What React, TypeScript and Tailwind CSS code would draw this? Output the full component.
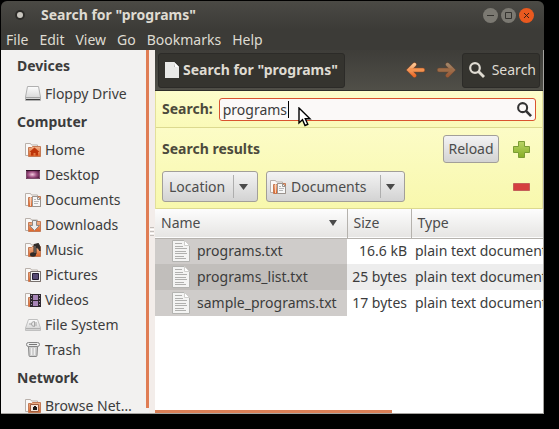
import React, { useState } from 'react';

type PlaceIconName =
  | 'floppy'
  | 'home'
  | 'desktop'
  | 'documents'
  | 'downloads'
  | 'music'
  | 'pictures'
  | 'videos'
  | 'filesystem'
  | 'trash'
  | 'network';

interface Place {
  label: string;
  icon: PlaceIconName;
}

const sections: { title: string; places: Place[] }[] = [
  { title: 'Devices', places: [{ label: 'Floppy Drive', icon: 'floppy' }] },
  {
    title: 'Computer',
    places: [
      { label: 'Home', icon: 'home' },
      { label: 'Desktop', icon: 'desktop' },
      { label: 'Documents', icon: 'documents' },
      { label: 'Downloads', icon: 'downloads' },
      { label: 'Music', icon: 'music' },
      { label: 'Pictures', icon: 'pictures' },
      { label: 'Videos', icon: 'videos' },
      { label: 'File System', icon: 'filesystem' },
      { label: 'Trash', icon: 'trash' },
    ],
  },
  { title: 'Network', places: [{ label: 'Browse Net…', icon: 'network' }] },
];

const menus = ['File', 'Edit', 'View', 'Go', 'Bookmarks', 'Help'];

const files = [
  { name: 'programs.txt', size: '16.6 kB', type: 'plain text document' },
  { name: 'programs_list.txt', size: '25 bytes', type: 'plain text document' },
  { name: 'sample_programs.txt', size: '17 bytes', type: 'plain text document' },
];

// Gradients shared by every icon on the page
function IconDefs() {
  return (
    <svg width="0" height="0" className="absolute" aria-hidden="true">
      <defs>
        <linearGradient id="orange" x1="0" y1="0" x2="0" y2="1">
          <stop offset="0" stopColor="#f0b690" />
          <stop offset="1" stopColor="#de6327" />
        </linearGradient>
        <linearGradient id="metal" x1="0" y1="0" x2="0" y2="1">
          <stop offset="0" stopColor="#fdfdfd" />
          <stop offset="1" stopColor="#cfcfcf" />
        </linearGradient>
        <linearGradient id="arrow" x1="0" y1="0" x2="0" y2="1">
          <stop offset="0" stopColor="#fbc490" />
          <stop offset="1" stopColor="#ec6c2a" />
        </linearGradient>
        <linearGradient id="plus" x1="0" y1="0" x2="0" y2="1">
          <stop offset="0" stopColor="#b9d565" />
          <stop offset="1" stopColor="#86ad26" />
        </linearGradient>
        <radialGradient id="aubergine" cx="0.45" cy="0.5" r="0.6">
          <stop offset="0" stopColor="#f3c6dc" />
          <stop offset="0.5" stopColor="#a05083" />
          <stop offset="1" stopColor="#4b1438" />
        </radialGradient>
      </defs>
    </svg>
  );
}

function FolderBase() {
  return (
    <>
      <path d="M.5 13.5v-12h5l1 1.500h6v10.500z" fill="#faf8f6" stroke="#b9b0aa" />
      <path d="M3.500 14.500v-9h3l1-1h8v10z" fill="url(#orange)" stroke="#c47a55" />
    </>
  );
}

function PlaceIcon({ name }: { name: PlaceIconName }) {
  return (
    <svg width="16" height="16" viewBox="0 0 16 16" fill="none" className="shrink-0" aria-hidden="true">
      {name === 'floppy' && (
        <>
          <path d="M2.500.500h11l2 10.500v3.500H.5V11z" fill="url(#metal)" stroke="#b0b0b0" />
          <path d="M1 11.500h14" stroke="#a3a3a3" />
          <path d="M1 13.500h14" stroke="#3c3c3c" />
        </>
      )}
      {name === 'home' && (
        <>
          <FolderBase />
          <path d="M9.500 5.500 4.500 10h1.500v3.500h2.500V11h2v2.500H13V10h1.500z" fill="#bd3409" />
        </>
      )}
      {name === 'desktop' && (
        <>
          <path d="M1 3h14v9H1z" fill="url(#aubergine)" />
          <path d="M1 3.500h14" stroke="#311026" />
          <path d="M1.500 4v7.500h13V4" stroke="#7d4a6b" />
        </>
      )}
      {name === 'documents' && (
        <>
          <FolderBase />
          <path d="M5.500 5v9" stroke="#f7cdb4" />
          <path d="M7.500 4.500h5l3 3v7h-8z" fill="#f7f7f7" stroke="#9a948f" />
          <path d="M12.500 4.500v3h3" stroke="#9a948f" />
          <path d="M9 7.500h2M9 9.500h5M9 11.500h4" stroke="#b8b8b8" />
        </>
      )}
      {name === 'downloads' && (
        <>
          <FolderBase />
          <path d="M7.500 3.500h4v5h3l-5 5-5-5h3z" fill="#ececec" stroke="#8f8883" />
        </>
      )}
      {name === 'music' && (
        <>
          <FolderBase />
          <path d="M9 12V2.500l4.500-1L15 5v4l-2-3-2-.5V12z" fill="#302a27" stroke="#302a27" />
          <ellipse cx="8" cy="12.500" rx="3" ry="2.200" fill="#302a27" />
          <path d="M10 4v7" stroke="#8a8480" />
        </>
      )}
      {name === 'pictures' && (
        <>
          <FolderBase />
          <path d="M5.500 4.500h10v10h-10z" fill="#f4f4f4" stroke="#77716e" />
          <path d="M7.500 6.500h6v6h-6z" fill="#564a75" stroke="#221c33" />
        </>
      )}
      {name === 'videos' && (
        <>
          <FolderBase />
          <path d="M5 2h11v13H5z" fill="#2e2730" />
          <path d="M8 3h5v5H8zM8 9h5v5H8z" fill="#a786b8" />
          <path d="M6.500 3v12M14.500 3v12" stroke="#a39aa8" strokeDasharray="1 2" />
        </>
      )}
      {name === 'filesystem' && (
        <>
          <path d="M3.500 2.500h9l3 8.500v2.500H.5V11z" fill="url(#metal)" stroke="#c0c0c0" />
          <path d="M1 11.500h14" stroke="#b0b0b0" />
          <path d="M4 7h3M9.500 4.500q-3 0-3 2.500t3 2.500zM10 6h2M10 8h2" stroke="#a5a5a5" />
        </>
      )}
      {name === 'trash' && (
        <>
          <path d="m3.500 4.500.5 9q0 1 1 1h6q1 0 1-1l.5-9z" fill="#d0d0d0" stroke="#858585" />
          <path d="M6.500 6v7M9.500 6v7" stroke="#efefef" />
          <rect x="1.500" y=".5" width="13" height="4" rx="2" fill="#ececec" stroke="#858585" />
          <path d="M4 2.500h8" stroke="#777" />
        </>
      )}
      {name === 'network' && (
        <>
          <FolderBase />
          <path d="M5.500 6.500h8v7h-8z" fill="#f6e6dc" stroke="#9d5b3c" />
          <path d="M8 9h1V8h2v1h1v3H8z" fill="#1f1a18" />
        </>
      )}
    </svg>
  );
}

function PageIcon() {
  return (
    <svg width="14" height="16" viewBox="0 0 14 16" fill="none" className="shrink-0" aria-hidden="true">
      <path d="M0 0h9l5 5v11H0z" fill="#e9e9e7" />
      <path d="M9 0v5h5z" fill="#b6b6b2" />
      <path d="M9 0l5 5h-4z" fill="#fff" />
    </svg>
  );
}

function TextFileIcon() {
  return (
    <svg width="18" height="22" viewBox="0 0 18 22" fill="none" className="shrink-0" aria-hidden="true">
      <path d="M.5.500h12l5 5v16H.5z" fill="#f4f4f3" stroke="#b3b3b0" />
      <path d="M12.500.500v5h5z" fill="#fff" stroke="#d0d0cd" />
      <path
        d="M3 3.500h7M3 6.500h8M3 8.500h12M3 11.500h11M3 13.500h12M3 16.500h9M3 18.500h11"
        stroke="#b0b0ae"
      />
    </svg>
  );
}

function MagnifierIcon({ className }: { className: string }) {
  return (
    <svg viewBox="0 0 16 16" fill="none" stroke="currentColor" className={className} aria-hidden="true">
      <circle cx="6" cy="6" r="4.800" strokeWidth="2.200" />
      <path d="m9.500 9.500 5.500 5.500" strokeWidth="2.800" />
    </svg>
  );
}

function ArrowIcon({ className }: { className: string }) {
  return (
    <svg width="20" height="16" viewBox="0 0 20 16" fill="none" className={className} aria-hidden="true">
      <path d="M8.500 2.500 3 8l5.500 5.500M4 8h13" stroke="#8b4a26" strokeWidth="4.400" strokeLinecap="round" />
      <path d="M8.500 2.500 3 8l5.500 5.500" stroke="url(#arrow)" strokeWidth="3.400" strokeLinecap="round" />
      <path d="M3.500 6.300H17q1.500.2 1.500 1.700T17 9.700H3.500z" fill="#f3924f" />
    </svg>
  );
}

interface ComboProps {
  label: string;
  options: string[];
  className: string;
  icon?: React.ReactNode;
}

function Combo({ label, options, className, icon }: ComboProps) {
  return (
    <div className="relative">
      <select
        aria-label={label}
        className={`block h-[31px] appearance-none rounded-[3px] border border-[#a29f99] bg-linear-to-b from-[#f3f3f3] to-[#d3d3d3] outline-none ${className}`}
      >
        {options.map((option) => (
          <option key={option}>{option}</option>
        ))}
      </select>
      {icon && <span className="pointer-events-none absolute top-2 left-1">{icon}</span>}
      <span className="pointer-events-none absolute inset-y-1 right-0 flex w-[25px] items-center border-l border-[#aeaeae] pl-[5px]">
        <svg width="9" height="6" viewBox="0 0 9 6" aria-hidden="true">
          <path d="M0 0h9L4.500 6z" fill="#4a4a4a" />
        </svg>
      </span>
    </div>
  );
}

function TitleBar() {
  return (
    <header className="flex h-7 shrink-0 items-center rounded-t-md bg-linear-to-b from-[#4b4a45] to-[#3c3b37] pr-[10px] pl-[14px]">
      <svg width="10" height="10" viewBox="0 0 10 10" aria-hidden="true">
        <circle cx="5" cy="5" r="5" fill="#2c2b28" />
        <circle cx="5" cy="5" r="3" fill="#c9c6bf" />
      </svg>
      <h1 className="ml-4 flex-1 truncate font-bold text-[#dfdbd2]">Search for "programs"</h1>
      <div className="flex gap-[3px]">
        <button type="button" aria-label="Minimize">
          <svg width="15" height="15" viewBox="0 0 15 15" fill="none">
            <circle cx="7.500" cy="7.500" r="7.500" fill="#7b7972" />
            <path d="M4 7.500h7" stroke="#34332f" />
          </svg>
        </button>
        <button type="button" aria-label="Maximize">
          <svg width="15" height="15" viewBox="0 0 15 15" fill="none">
            <circle cx="7.500" cy="7.500" r="7.500" fill="#7b7972" />
            <path d="M4.500 4.500h6v6h-6z" stroke="#34332f" />
          </svg>
        </button>
        <button type="button" aria-label="Close">
          <svg width="15" height="15" viewBox="0 0 15 15" fill="none">
            <circle cx="7.500" cy="7.500" r="7.500" fill="#e9591f" />
            <path d="m5 5 5 5M10 5l-5 5" stroke="#3c2014" />
          </svg>
        </button>
      </div>
    </header>
  );
}

function Sidebar() {
  return (
    <aside className="flex w-[154px] shrink-0 bg-[#f2f1f0]">
      <nav className="min-w-0 flex-1 overflow-hidden">
        {sections.map((section) => (
          <section key={section.title}>
            <h2 className="flex h-[31px] items-center pl-4 font-bold">{section.title}</h2>
            {section.places.map((place) => (
              <a key={place.label} href="#" className="flex h-[25px] items-center gap-1 pl-6 whitespace-nowrap">
                <PlaceIcon name={place.icon} />
                {place.label}
              </a>
            ))}
          </section>
        ))}
      </nav>
      <div className="mb-[5px] w-[3px] shrink-0 bg-[#e07d54]" />
      {/* pane grip */}
      <div className="flex w-[6px] shrink-0 flex-col items-center justify-center gap-px bg-[#f3edea]">
        <span className="h-px w-1 bg-[#c4bfbb]" />
        <span className="h-px w-1 bg-white" />
        <span className="h-px w-1 bg-[#c4bfbb]" />
        <span className="h-px w-1 bg-white" />
        <span className="h-px w-1 bg-[#c4bfbb]" />
      </div>
    </aside>
  );
}

function Toolbar() {
  return (
    <div className="flex h-[41px] shrink-0 items-center border-b border-[#2f2e2a] bg-linear-to-b from-[#3e3d39] to-[#504f48] px-[3px] text-[#dfdbd2]">
      <button
        type="button"
        className="flex h-[35px] items-center gap-1 rounded-[3px] border border-[#2c2b28] bg-[#35342f] px-[6px] font-bold whitespace-nowrap"
      >
        <PageIcon />
        Search for "programs"
      </button>
      <button type="button" aria-label="Back" className="ml-auto">
        <ArrowIcon className="" />
      </button>
      <button type="button" aria-label="Forward" className="ml-[10px]">
        <ArrowIcon className="-scale-x-100 opacity-50" />
      </button>
      <button
        type="button"
        className="ml-[6px] flex h-[35px] items-center gap-[7px] rounded-[3px] border border-[#2c2b28] bg-[#35342f] pr-[3px] pl-[6px]"
      >
        <MagnifierIcon className="size-4" />
        Search
      </button>
    </div>
  );
}

function SearchPanel() {
  const [query, setQuery] = useState('programs');

  return (
    <div className="shrink-0 border-x border-[#e3e09a] text-[#4c4a3c]">
      <div className="flex h-[37px] items-center gap-[6px] border-b border-[#dcd98f] bg-linear-to-b from-[#fdfdcb] to-[#fafab8] px-[6px]">
        <label htmlFor="query" className="font-bold">
          Search:
        </label>
        <div className="relative min-w-0 flex-1">
          <input
            id="query"
            value={query}
            onChange={(e) => setQuery(e.target.value)}
            className="block h-[23px] w-full rounded-[3px] border border-[#d9542f] bg-[#fbf9f8] pr-6 pl-[3px] text-[#3c3c3c] outline-none"
          />
          <span className="absolute top-[3px] left-[69px] h-[17px] w-px bg-black" />
          <MagnifierIcon className="absolute top-1 right-1 size-[15px] text-[#333]" />
          {/* mouse pointer */}
          <svg width="14" height="20" viewBox="0 0 14 20" className="absolute top-[9px] left-[79px]" aria-hidden="true">
            <path
              d="M1 1v15l3.500-3.200L7 18.500l2.800-1.200-2.500-5.500H12z"
              fill="#fff"
              stroke="#000"
              strokeWidth="1.400"
            />
          </svg>
        </div>
      </div>
      <div className="border-b border-[#dcd98f] bg-linear-to-b from-[#fcfcc6] to-[#f8f8ad] pt-[6px] pr-[12px] pb-[6px] pl-[6px]">
        <div className="flex h-[30px] items-center">
          <h2 className="flex-1 font-bold">Search results</h2>
          <button
            type="button"
            className="h-7 w-14 rounded-[3px] border border-[#a29f99] bg-linear-to-b from-[#f3f3f3] to-[#d3d3d3] text-center text-[#4c4c4c]"
          >
            Reload
          </button>
          <button type="button" aria-label="Add a new criterion" className="ml-[14px]">
            <svg width="17" height="17" viewBox="0 0 17 17" className="block">
              <path d="M5.500.500h6v5h5v6h-5v5h-6v-5h-5v-6h5z" fill="url(#plus)" stroke="#7b9c34" />
            </svg>
          </button>
        </div>
        <div className="mt-[7px] flex items-center gap-2 text-[#4c4c4c]">
          <Combo label="Search by" options={['Location', 'File Type']} className="w-24 pl-[6px]" />
          <Combo
            label="Folder"
            options={['Documents', 'Downloads', 'Music']}
            className="w-[139px] pl-6"
            icon={<PlaceIcon name="documents" />}
          />
          <button type="button" aria-label="Remove this criterion" className="ml-auto">
            <svg width="17" height="8" viewBox="0 0 17 8" className="block">
              <path d="M.5.500h16v7H.5z" fill="#d5403f" stroke="#c4605a" />
            </svg>
          </button>
        </div>
      </div>
    </div>
  );
}

function FileTable() {
  return (
    <div className="min-h-0 flex-1 overflow-hidden bg-white">
      <table className="w-full table-fixed border-collapse whitespace-nowrap">
        <thead>
          <tr className="h-[29px] border-b border-[#b5b2ad] bg-linear-to-b from-[#fdfdfd] to-[#e6e5e3] text-left text-[#4c4c4c]">
            <th className="w-48 border-r border-[#b5b2ad] px-[6px] font-normal">
              <div className="flex items-center justify-between">
                Name
                <svg width="8" height="6" viewBox="0 0 8 6" className="mr-1" aria-hidden="true">
                  <path d="M0 0h8L4 6z" fill="#4a4a4a" />
                </svg>
              </div>
            </th>
            <th className="w-16 border-r border-[#b5b2ad] px-[6px] font-normal">Size</th>
            <th className="px-[6px] font-normal">Type</th>
          </tr>
        </thead>
        <tbody>
          {files.map((file) => (
            <tr key={file.name} className="group h-[26px] even:bg-[#ededed]">
              <td className="bg-[#cfccca] group-even:bg-[#c1bebb]">
                <div className="flex items-center gap-[7px] pl-[17px]">
                  <TextFileIcon />
                  {file.name}
                </div>
              </td>
              <td className="pr-1 text-right">{file.size}</td>
              <td className="overflow-hidden pl-1">{file.type}</td>
            </tr>
          ))}
        </tbody>
      </table>
    </div>
  );
}

export default function App() {
  return (
    <div className="flex h-screen flex-col bg-black pt-px pr-[15px] pb-[15px] pl-px font-['Noto_Sans','Open_Sans',sans-serif] text-sm leading-5 text-[#3c3c3c]">
      <IconDefs />
      <TitleBar />
      <nav className="flex h-[21px] shrink-0 items-center gap-[11px] bg-[#3c3b37] pl-[5px] text-[#dfdbd2]">
        {menus.map((menu) => (
          <button key={menu} type="button">
            {menu}
          </button>
        ))}
      </nav>
      <div className="flex min-h-0 flex-1 border-r border-b border-[#a5a3a0]">
        <Sidebar />
        <main className="flex min-w-0 flex-1 flex-col">
          <Toolbar />
          <SearchPanel />
          <FileTable />
          <div className="h-[3px] shrink-0 bg-white">
            <div className="h-full w-[61%] bg-[#d97f57]" />
          </div>
        </main>
      </div>
    </div>
  );
}
